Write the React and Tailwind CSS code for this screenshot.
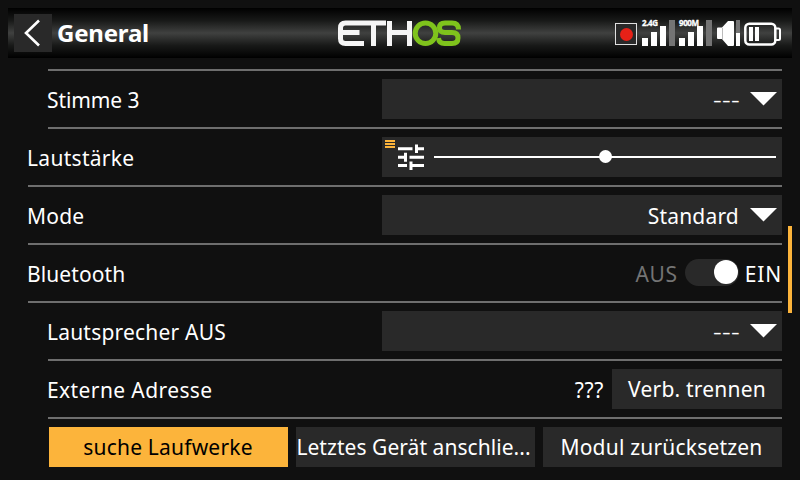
import React from "react";

const ROW_BORDER = "border-b-2 border-[#6e6e6e]";

function Row({ label, indent, spacing = "tracking-[0.2px]", children }) {
  return (
    <div className={`flex h-[58px] items-center justify-between ${ROW_BORDER} ${indent ? "ml-5" : ""}`}>
      <span className={`-ml-px pt-0.5 ${spacing}`}>{label}</span>
      {children}
    </div>
  );
}

function Select({ children }) {
  return (
    <div className="flex h-10 w-[400px] items-center justify-end bg-[#292929] pr-[5px]">
      {children}
      <svg className="ml-[11px] h-[14px] w-[27px]" viewBox="0 0 27 14">
        <path d="M0 0H27L13.5 13.5Z" fill="#fff" />
      </svg>
    </div>
  );
}

function Dashes() {
  return (
    <span className="-mr-px whitespace-nowrap text-[27px] font-light leading-[28px] tracking-[0.3px]">---</span>
  );
}

function Logo() {
  return (
    <svg className="h-[27px] w-[124px]" viewBox="0 0 124 27" fill="none" strokeWidth="5">
      <g stroke="#f5f5f5">
        <path d="M48 3H7.500Q2.500 3 2.500 8V18.500Q2.500 23.500 7.500 23.500H26M4 12.500H21.500" />
        <path d="M35.500 3V26M51.500 1V26M71.500 1V26M52 12.500H71" />
      </g>
      <g stroke="#7fc31c">
        <circle cx="87.500" cy="13.300" r="10.300" />
        <path d="M120.500 9.500Q120.500 3 114 3H107Q101.500 3 101.500 7.800Q101.500 12.500 107 12.500H114Q120 12.500 120 18Q120 23.500 114 23.500H106.500Q101 23.500 100.500 18" />
      </g>
    </svg>
  );
}

function StatusIcons() {
  return (
    <svg className="h-[28px] w-[168px] overflow-visible" viewBox="614 19 168 28">
      <rect x="615.5" y="23.500" width="21" height="21" fill="#292929" stroke="#e0e0e0" />
      <circle cx="626.500" cy="34.500" r="6.500" fill="#e62117" />
      <path d="M669 20h6v26h-6zM706 20h6v26h-6zM736 20h4v13h-4z" fill="#747474" />
      <g fill="#fff">
        <path d="M642 38h6v8h-6zM651 32h6v14h-6zM660 26h6v20h-6zM679 38h6v8h-6zM688 32h6v14h-6zM697 26h6v20h-6z" />
        <path d="M718 27.500h4l6-6.500h5q1 0 1 1v23q0 1-1 1h-5l-6-7h-4q-1 0-1-1v-9.500q0-1 1-1zM736 33h4v13h-4z" />
      </g>
      <path d="M722.500 28v11" stroke="#bbb" />
      <g fill="#fff" stroke="#fff" strokeWidth="0.300" fontFamily="Noto Sans, sans-serif" fontWeight="700" fontSize="8">
        <text x="642" y="26" textLength="16">2.4G</text>
        <text x="679" y="26" textLength="20">900M</text>
      </g>
      <g stroke="#fff" strokeWidth="2.500" fill="none">
        <rect x="745.300" y="23.800" width="30" height="20.700" rx="4" />
        <path d="M776 28.500h2.500q1.500 0 1.500 1.500v8.500q0 1.500-1.500 1.500H776" strokeWidth="2" />
      </g>
      <path d="M749 27h4v14h-4zM755 27h4v14h-4z" fill="#fff" />
    </svg>
  );
}

function VolumeSlider() {
  return (
    <div className="h-10 w-[400px] bg-[#292929]">
      <svg className="h-10 w-[400px]" viewBox="382 137 400 40">
        <path d="M385 140h10v2h-10zM385 143h10v2h-10zM385 146h10v2h-10z" fill="#fcb43b" />
        <g fill="#fff">
          <path d="M398 147.300h14.500v3h-14.500zM415 144.500h3v2.800h6v3h-6v2.700h-3z" />
          <path d="M398 155.700h6v-3h3v9h-3v-3h-6zM409.500 155.700H424v3h-14.500z" />
          <path d="M398 164h9v3h-9zM409.500 161.500h3v2.500H424v3h-11.500v3h-3z" />
          <path d="M434 156h342v2H434z" />
          <circle cx="605.500" cy="156.500" r="6.500" />
        </g>
      </svg>
    </div>
  );
}

function Button({ children, className }) {
  return (
    <button className={`flex h-10 items-center justify-center whitespace-nowrap ${className}`}>
      {children}
    </button>
  );
}

export default function App() {
  return (
    <div className="flex h-[480px] w-[800px] flex-col overflow-hidden bg-[#101010] pt-2 font-['Noto_Sans',sans-serif] text-[21px] leading-[28px] text-white">
      <header className="mx-2 grid h-[50px] shrink-0 grid-cols-[330px_1fr_auto] bg-[linear-gradient(#000_0%,#181918_25%,#404140_50%,#181918_75%,#000_100%)] pr-2.5">
        <div className="flex items-center pl-1.5">
          <div className="flex h-[38px] w-[38px] items-center justify-center bg-[#292929]">
            <svg className="h-[38px] w-[38px]" viewBox="0 0 38 38" fill="none" stroke="#fff" strokeWidth="2.600">
              <path d="M25 6.500L12 19L25 31.500" />
            </svg>
          </div>
          <h1 className="ml-[5px] text-[24px] font-bold tracking-[-0.2px]">General</h1>
        </div>
        <div className="pt-3"><Logo /></div>
        <div className="pt-[11px]"><StatusIcons /></div>
      </header>

      <div className="flex">
        <main className="ml-7 w-[754px] shrink-0">
          <div className={`ml-5 h-[13px] ${ROW_BORDER}`} />
          <Row label="Stimme 3" indent spacing="tracking-[-0.1px]"><Select><Dashes /></Select></Row>
          <Row label="Lautstärke" spacing="tracking-[0.3px]"><VolumeSlider /></Row>
          <Row label="Mode">
            <Select><span className="pt-0.5 tracking-[0.2px]">Standard</span></Select>
          </Row>
          <Row label="Bluetooth" spacing="tracking-[0.1px]">
            <div className="flex items-center">
              <span className="pt-0.5 tracking-[0.7px] text-[#747474]">AUS</span>
              <div className="ml-[7px] mb-0.5 flex h-[27px] w-[54px] items-center justify-end rounded-full bg-[#292929] pr-px">
                <div className="h-6 w-6 rounded-full bg-white" />
              </div>
              <span className="ml-1.5 pt-0.5 tracking-[0.8px]">EIN</span>
            </div>
          </Row>
          <Row label="Lautsprecher AUS" indent><Select><Dashes /></Select></Row>
          <Row label="Externe Adresse" indent spacing="tracking-[0.4px]">
            <div className="flex items-center">
              <span className="mr-2 pt-0.5 tracking-[0.6px]">???</span>
              <Button className="w-[170px] bg-[#292929] tracking-[0.2px]">Verb. trennen</Button>
            </div>
          </Row>
          <div className="ml-[21px] mt-2 flex gap-2">
            <Button className="w-[239px] bg-[#fcb43b] pr-px tracking-[0.2px] text-black">suche Laufwerke</Button>
            <Button className="w-[239px] bg-[#292929] pr-1 tracking-[0.05px]">Letztes Gerät anschlie...</Button>
            <Button className="w-[239px] bg-[#292929] pr-0.5 tracking-[0.2px]">Modul zurücksetzen</Button>
          </div>
        </main>
        <div className="ml-1.5 mt-[168px] h-[87px] w-1 bg-[#fcb43b]" />
      </div>
    </div>
  );
}
